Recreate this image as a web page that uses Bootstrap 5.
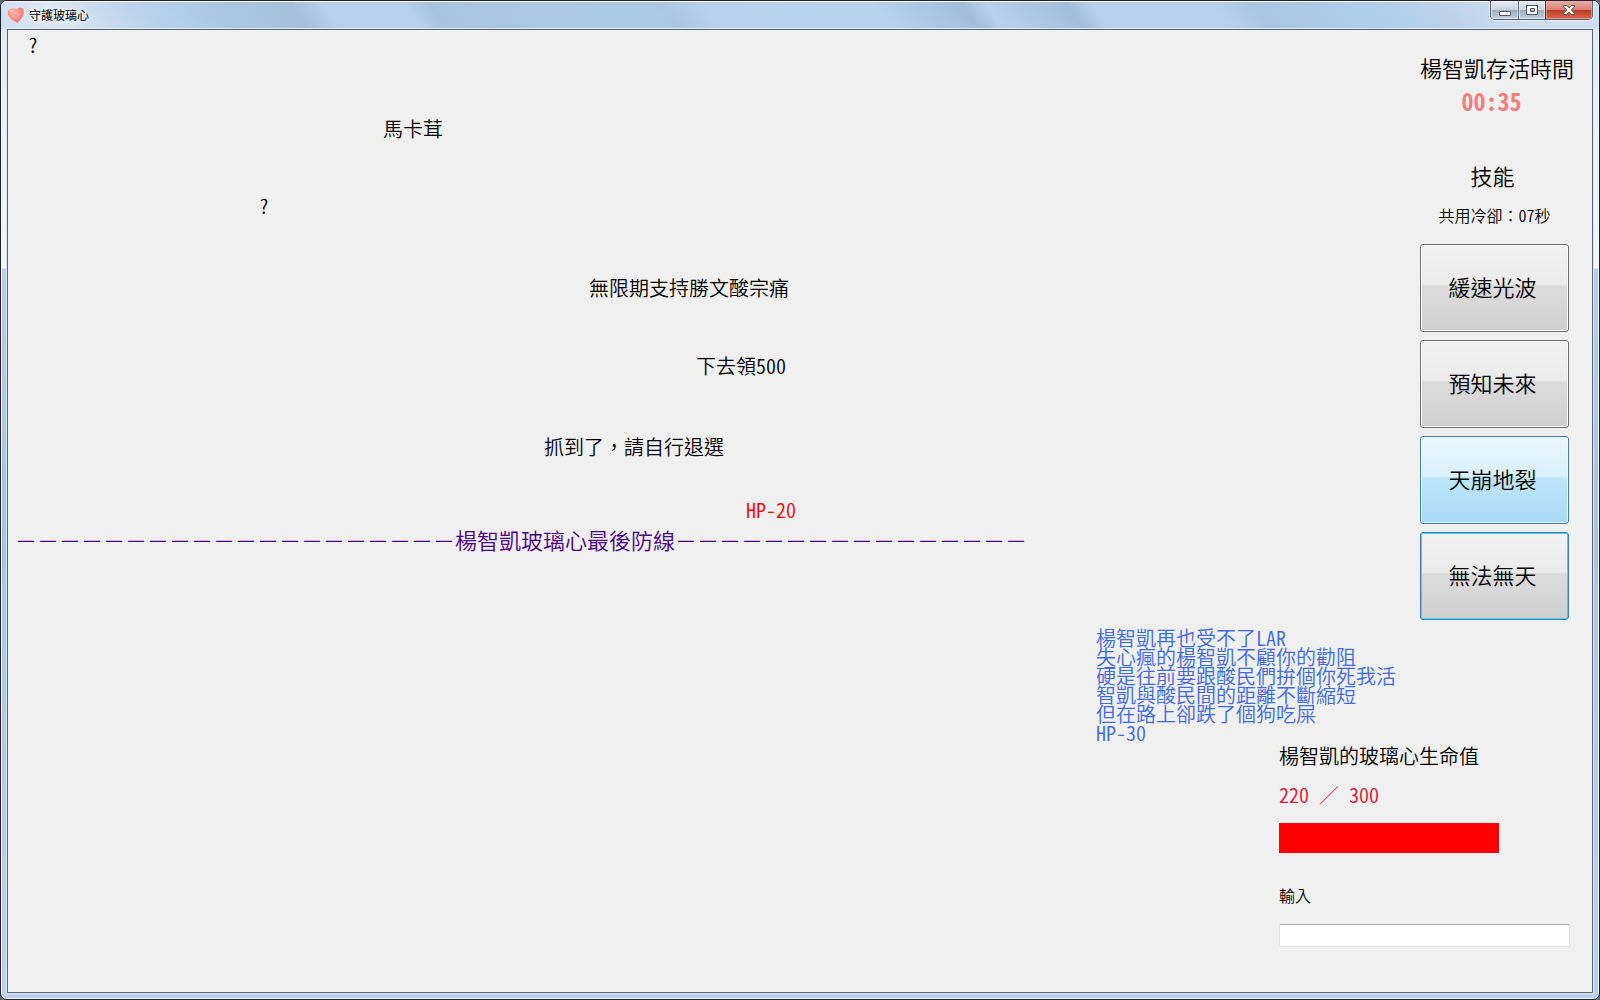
<!DOCTYPE html>
<html lang="zh-Hant">
<head>
<meta charset="utf-8">
<meta name="viewport" content="width=device-width, initial-scale=1">
<title>守護玻璃心</title>
<link href="https://cdn.jsdelivr.net/npm/bootstrap@5.3.0/dist/css/bootstrap.min.css" rel="stylesheet">
<style>
  body { font-family: "Noto Sans CJK TC", sans-serif; font-feature-settings: "hwid"; font-weight: 350; font-size: 20px; line-height: 20px; color: #000; background: #5b6a70; }
  .fullw { font-feature-settings: normal; }
  .win { border: 1px solid #22222e; border-radius: 7px; padding: 0 6px 6px; overflow: hidden;
    box-shadow: inset 0 0 0 1px #f2f7fc;
    background: linear-gradient(#dfeaf6 0, #f3f7fc 267px, #b5cfea 268px, #a9c4e2 50%, #b8d2ee 100%); }
  .titlebar { height: 28px; margin: 0 -6px; padding: 0 6px; box-shadow: inset 0 1px #f7faff;
    background: linear-gradient(55deg, #cfdef0 0, #dbe7f4 4%, #bcd3eb 9%, #b0cee9 12%, #a9c6e0 15%, #a6c0dc 19%, #b8d2ed 21%, #b8d2ed 26%, #a8c3df 27.5%, #accae3 34%, #abcbe4 41%, #abc7e2 42%, #b8d2ed 44.5%, #b8d3ee 55%, #a3bedb 60.5%, #b8d2ed 62%, #b4cee9 63%, #a3bedb 67%, #b8d2ed 68.5%, #b8d2ed 76%, #abc6e2 78.5%, #aecfea 86%, #bdd2ea 90%, #cfdff2 95%); }
  .titletext { font-size: 12px; line-height: 16px; font-weight: 400; text-shadow: 0 0 6px #fff, 0 0 10px #fff; }
  .capgroup { height: 19px; border: 1px solid #565e70; border-top: 0; border-radius: 0 0 5px 5px; overflow: hidden; box-shadow: 0 0 0 1px #e6eef8; }
  .capbtn { border: 0; padding: 0; width: 27px; background: linear-gradient(#e8edf4 0, #c8d2df 48%, #9aacc1 50%, #c2d0e0 100%); box-shadow: inset 0 0 0 1px #f3f6fa99; }
  .capbtn + .capbtn { border-left: 1px solid #66728a; }
  .capbtn.shut { width: 47px; border-left-color: #6b1d1d; background: linear-gradient(#ecaca4 0, #d98078 48%, #bb3a22 50%, #d9694c 100%); box-shadow: inset 0 0 0 1px #f3b6a899; }
  .client { background: #f0f0f0; border: 1px solid #566370; box-shadow: 0 0 0 1px #dfeaf6; }
  .field { min-width: 0; }
  .word { position: absolute; white-space: nowrap; }
  .defence { color: #4b0082; font-size: 22px; line-height: 22px; }
  .side { width: 496px; padding: 26px 22px 38px 0; }
  .skills { width: 149px; margin-right: 1px; }
  .big { font-size: 22px; line-height: 22px; }
  .clock { color: #f08080; font-size: 24px; font-weight: 700; margin: 12px 6px 52px 0; }
  .skilltitle { margin-right: 4px; }
  .cool { font-size: 16px; line-height: 16px; margin: 21px 0; }
  .skillbtn { height: 88px; padding: 0 4px 4px 0; font-size: 22px; font-weight: 350; line-height: 22px; color: #000; border: 1px solid #707070; border-radius: 3px; box-shadow: inset 0 0 0 1px #fbfbfb;
    background: linear-gradient(#f2f2f2 0, #ebebeb 46%, #dddddd 47%, #cfcfcf 100%); }
  .skillbtn.hot { border-color: #3c7fb1; background: linear-gradient(#eaf6fd 0, #d9f0fc 46%, #bee6fd 47%, #a7d9f5 100%); }
  .skillbtn.def { border-color: #3c7fb1; box-shadow: inset 0 0 0 1px #48d0f2; }
  .story { color: #4169e1; line-height: 19px; margin: 8px 0 4px; }
  .status { width: 291px; }
  .hp { color: #dc143c; margin: 19px 0 18px; }
  .life { width: 220px; height: 30px; background: none; border-radius: 0; }
  .lifefill { width: 100%; background: #f00; }
  .entrylabel { font-size: 16px; line-height: 16px; margin: 34px 0 21px; }
  .entry { height: 23px; min-height: 0; padding: 0 4px; border: 1px solid #e2e3ea; border-top-color: #abadb3; border-radius: 2px; font-size: 16px; line-height: 20px; }
</style>
</head>
<body>
<div class="win min-vh-100 d-flex flex-column">
  <header class="titlebar d-flex">
    <div class="d-flex align-items-center gap-1 flex-grow-1">
      <svg width="18" height="18" viewBox="0 0 18 18" aria-hidden="true">
        <defs><radialGradient id="pink" cx=".4" cy=".35" r=".7"><stop offset="0" stop-color="#ffb3aa"/><stop offset=".6" stop-color="#fa8d84"/><stop offset="1" stop-color="#e4685e"/></radialGradient></defs>
        <path d="M9.500 3.200C11 1.300 14 .9 15.600 2.600c1.900 2 1.300 5.200.1 7.600-1.200 2.500-3.300 4.900-5.200 6.600-3.200-1.400-7.200-3.500-8.900-6.500C.3 7.900 1 4.300 3.400 3c2.200-1.100 4.700-.8 6.100.2z" fill="url(#pink)"/>
        <path d="M3.300 6.200c.4-1.300 1.500-2 2.800-1.900" stroke="#ffd9d3" stroke-width="1.200" fill="none" stroke-linecap="round"/>
      </svg>
      <span class="titletext">守護玻璃心</span>
    </div>
    <div class="capgroup d-flex">
      <button class="capbtn d-flex align-items-center justify-content-center" type="button" aria-label="最小化"><svg width="14" height="14" viewBox="0 0 14 14"><rect x="1.500" y="8.500" width="11" height="4" rx=".5" fill="#fff" stroke="#535666"/></svg></button>
      <button class="capbtn d-flex align-items-center justify-content-center" type="button" aria-label="最大化"><svg width="14" height="14" viewBox="0 0 14 14"><path d="M1.500 2.500h11v9h-11zM5.500 5.500v3h4v-3z" fill="#fff" fill-rule="evenodd" stroke="#535666"/></svg></button>
      <button class="capbtn shut d-flex align-items-center justify-content-center" type="button" aria-label="關閉"><svg width="14" height="14" viewBox="0 0 14 14"><path d="M1.500 2.500h3.300L7 4.900l2.200-2.400h3.300v1.300L9.200 7l3.300 3.200v1.300H9.200L7 9.100l-2.200 2.400H1.500v-1.300L4.800 7 1.500 3.800z" fill="#fff" stroke="#535666"/></svg></button>
    </div>
  </header>

  <main class="client d-flex flex-grow-1">
    <section class="field position-relative flex-grow-1">
      <span class="word" style="left:20px;top:5px">?</span>
      <span class="word" style="left:375px;top:89px">馬卡茸</span>
      <span class="word" style="left:251px;top:166px">?</span>
      <span class="word" style="left:581px;top:248px">無限期支持勝文酸宗痛</span>
      <span class="word" style="left:688px;top:326px">下去領500</span>
      <span class="word" style="left:536px;top:407px">抓到了，請自行退選</span>
      <span class="word" style="left:738px;top:470px;color:#f00">HP-20</span>
      <span class="word defence fullw" style="left:7px;top:498px">－－－－－－－－－－－－－－－－－－－－楊智凱玻璃心最後防線－－－－－－－－－－－－－－－－</span>
    </section>

    <aside class="side flex-shrink-0">
      <section class="skills ms-auto text-center">
        <div class="big text-nowrap">楊智凱存活時間</div>
        <div class="big clock">00:35</div>
        <div class="big skilltitle">技能</div>
        <div class="cool text-nowrap">共用冷卻<span class="fullw">：</span>07秒</div>
        <div class="d-grid gap-2">
          <button class="btn skillbtn" type="button">緩速光波</button>
          <button class="btn skillbtn" type="button">預知未來</button>
          <button class="btn skillbtn hot" type="button">天崩地裂</button>
          <button class="btn skillbtn def" type="button">無法無天</button>
        </div>
      </section>
      <div class="story">
        楊智凱再也受不了LAR<br>失心瘋的楊智凱不顧你的勸阻<br>硬是往前要跟酸民們拚個你死我活<br>智凱與酸民間的距離不斷縮短<br>但在路上卻跌了個狗吃屎<br>HP-30
      </div>
      <section class="status ms-auto">
        <div>楊智凱的玻璃心生命值</div>
        <div class="hp">220 <span class="fullw">／</span> 300</div>
        <div class="progress life" role="progressbar" aria-label="生命值" aria-valuenow="220" aria-valuemin="0" aria-valuemax="300"><div class="progress-bar lifefill"></div></div>
        <label class="entrylabel d-block" for="entry">輸入</label>
        <input class="form-control entry" id="entry" type="text">
      </section>
    </aside>
  </main>
</div>
<script src="https://cdn.jsdelivr.net/npm/bootstrap@5.3.0/dist/js/bootstrap.bundle.min.js"></script>
</body>
</html>
